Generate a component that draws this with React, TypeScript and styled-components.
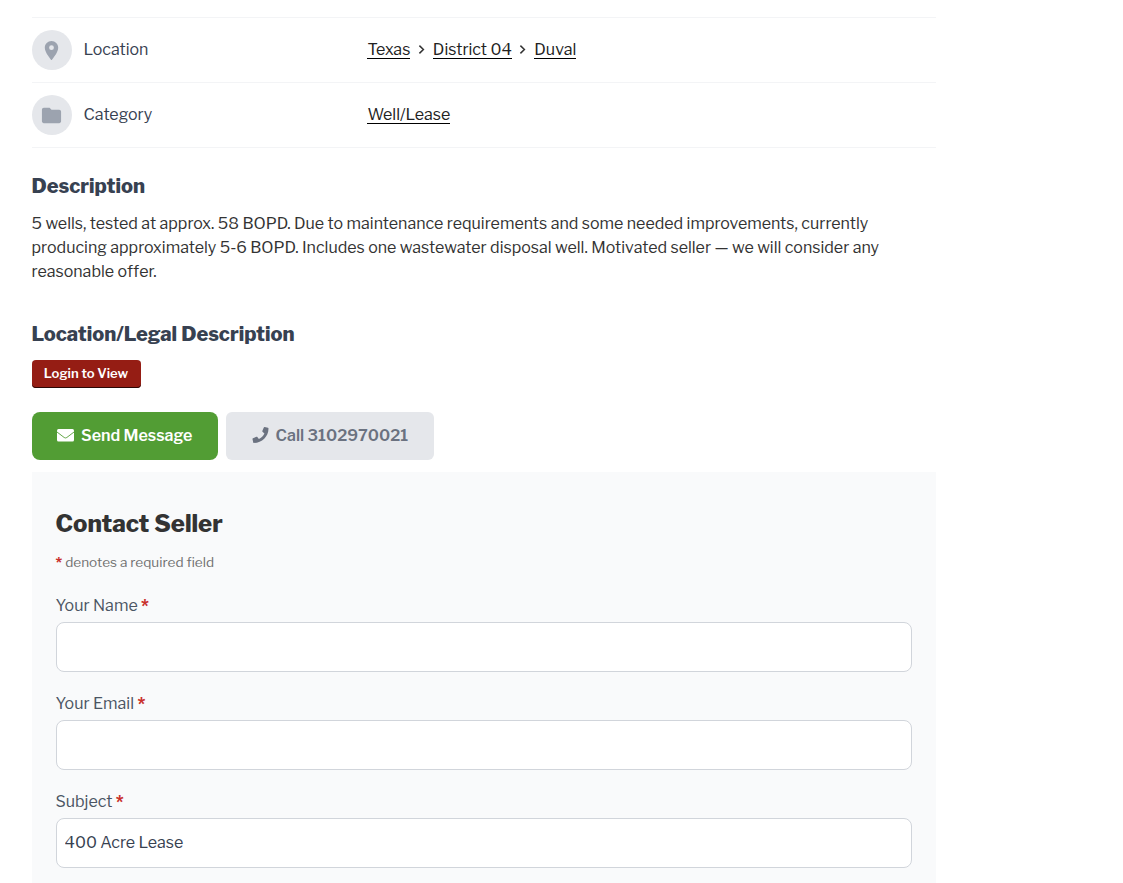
import React, { useState } from "react";
import { FaPhone } from "react-icons/fa";
import { MdFolder, MdPlace } from "react-icons/md";
import styled, { createGlobalStyle } from "styled-components";

const GlobalStyle = createGlobalStyle`
  *, *::before, *::after {
    box-sizing: border-box;
  }

  html {
    overflow: hidden;
  }

  body {
    margin: 0;
    background: #fff;
    color: #333;
    font-family: "Libre Franklin", Inter, "Liberation Sans", sans-serif;
    font-size: 16px;
    line-height: 24px;
  }
`;

const Page = styled.main`
  width: 935.5px;
  height: 883px;
  padding: 17px 0 0 31.5px;
  overflow: hidden;
`;

const Details = styled.dl`
  margin: 0;
  border-top: 1px solid #f3f4f6;
`;

const DetailRow = styled.div`
  display: grid;
  grid-template-columns: 335.9px 1fr;
  align-items: center;
  padding: 12px 0;
  border-bottom: 1px solid #f3f4f6;
`;

const DetailName = styled.dt`
  display: flex;
  align-items: center;
  gap: 12px;
  color: #374151;
`;

const IconCircle = styled.span`
  display: flex;
  align-items: center;
  justify-content: center;
  width: 40px;
  height: 40px;
  border-radius: 50%;
  background: #e5e7eb;
  color: #9ca3af;
  font-size: 23px;
`;

const DetailValue = styled.dd`
  display: flex;
  align-items: center;
  margin: 0;
  padding-bottom: 2px;
`;

const DetailLink = styled.a`
  height: 19px;
  line-height: 19px;
  border-bottom: 1px solid #000;
  color: #222;
  text-decoration: none;
`;

const Chevron = styled.svg`
  width: 7px;
  height: 9px;
  margin: 1px 8px 0 7.5px;
  fill: none;
  stroke: #333;
  stroke-width: 1.5;
`;

const SectionTitle = styled.h2<{ $top: number }>`
  margin: ${({ $top }) => $top}px 0 0;
  color: #374151;
  font-size: 20px;
  font-weight: 800;
  line-height: 28px;
`;

const Description = styled.p`
  margin: 12px 0 0;
`;

const LoginButton = styled.button`
  display: block;
  width: 109px;
  height: 28px;
  margin-top: 12px;
  padding: 0 0 2px;
  border: 0;
  border-radius: 4px;
  background: #951d14;
  box-shadow: inset 0 -1px 0 #2b0705;
  color: #fff;
  font: 600 13.1px/24px "Libre Franklin", Inter, sans-serif;
`;

const Actions = styled.div`
  display: flex;
  gap: 8px;
  margin: 24px 0 12px;
`;

const ActionButton = styled.button<{ $primary?: boolean }>`
  display: flex;
  align-items: center;
  gap: 7px;
  width: ${({ $primary }) => ($primary ? 186 : 208)}px;
  height: 48px;
  padding: 0 0 1px ${({ $primary }) => ($primary ? 25.5 : 26)}px;
  border: 0;
  border-radius: ${({ $primary }) => ($primary ? 8 : 6)}px;
  background: ${({ $primary }) => ($primary ? "#529d34" : "#e5e7eb")};
  color: ${({ $primary }) => ($primary ? "#fff" : "#6b7280")};
  font: 600 16px/24px "Libre Franklin", Inter, sans-serif;
  white-space: nowrap;

  svg {
    flex: none;
    width: 17px;
    margin-bottom: 1px;
  }
`;

const ContactPanel = styled.section`
  padding: 36px 24px;
  background: #f9fafb;
`;

const ContactTitle = styled.h2`
  margin: 0;
  font-size: 24px;
  font-weight: 800;
  line-height: 32px;
`;

const RequiredNote = styled.p`
  margin: 12px 0 22px;
  color: #707070;
  font-size: 13.6px;
  line-height: 20px;
`;

const Required = styled.span`
  color: #c9302c;
  font-weight: 800;
`;

const Field = styled.label`
  display: block;
  margin-bottom: 20px;
  color: #4b5563;
`;

const Input = styled.input`
  display: block;
  width: 100%;
  height: 50px;
  margin-top: 4px;
  padding: 0 8px 2px;
  border: 1px solid #d1d5db;
  border-radius: 8px;
  background: #fff;
  color: #374151;
  font: inherit;
  outline: none;
`;

const EnvelopeIcon = () => (
  <svg viewBox="0 0 17 13" height="13">
    <rect width="17" height="12.6" rx="1.5" fill="currentColor" />
    <path
      d="M0 3 7.2 8.5Q8.5 9.4 9.8 8.5L17 3"
      fill="none"
      stroke="#529d34"
      strokeWidth="0.9"
    />
  </svg>
);

const crumbs = ["Texas", "District 04", "Duval"];

export default function App() {
  const [subject, setSubject] = useState("400 Acre Lease");

  return (
    <Page>
      <GlobalStyle />
      <Details>
        <DetailRow>
          <DetailName>
            <IconCircle>
              <MdPlace />
            </IconCircle>
            Location
          </DetailName>
          <DetailValue>
            {crumbs.map((crumb, i) => (
              <React.Fragment key={crumb}>
                {i > 0 && (
                  <Chevron viewBox="0 0 7 9">
                    <path d="M1.4 0.6 5.4 4.5 1.4 8.4" />
                  </Chevron>
                )}
                <DetailLink>{crumb}</DetailLink>
              </React.Fragment>
            ))}
          </DetailValue>
        </DetailRow>
        <DetailRow>
          <DetailName>
            <IconCircle>
              <MdFolder />
            </IconCircle>
            Category
          </DetailName>
          <DetailValue>
            <DetailLink>Well/Lease</DetailLink>
          </DetailValue>
        </DetailRow>
      </Details>

      <SectionTitle $top={24}>Description</SectionTitle>
      <Description>
        5 wells, tested at approx. 58 BOPD. Due to maintenance requirements and
        some needed improvements, currently producing approximately 5-6 BOPD.
        Includes one wastewater disposal well. Motivated seller — we will
        consider any reasonable offer.
      </Description>

      <SectionTitle $top={36}>Location/Legal Description</SectionTitle>
      <LoginButton>Login to View</LoginButton>

      <Actions>
        <ActionButton $primary>
          <EnvelopeIcon />
          Send Message
        </ActionButton>
        <ActionButton>
          <FaPhone />
          Call 3102970021
        </ActionButton>
      </Actions>

      <ContactPanel>
        <ContactTitle>Contact Seller</ContactTitle>
        <RequiredNote>
          <Required>*</Required> denotes a required field
        </RequiredNote>
        <Field>
          Your Name <Required>*</Required>
          <Input type="text" />
        </Field>
        <Field>
          Your Email <Required>*</Required>
          <Input type="email" />
        </Field>
        <Field>
          Subject <Required>*</Required>
          <Input
            type="text"
            value={subject}
            onChange={(e) => setSubject(e.target.value)}
          />
        </Field>
      </ContactPanel>
    </Page>
  );
}
